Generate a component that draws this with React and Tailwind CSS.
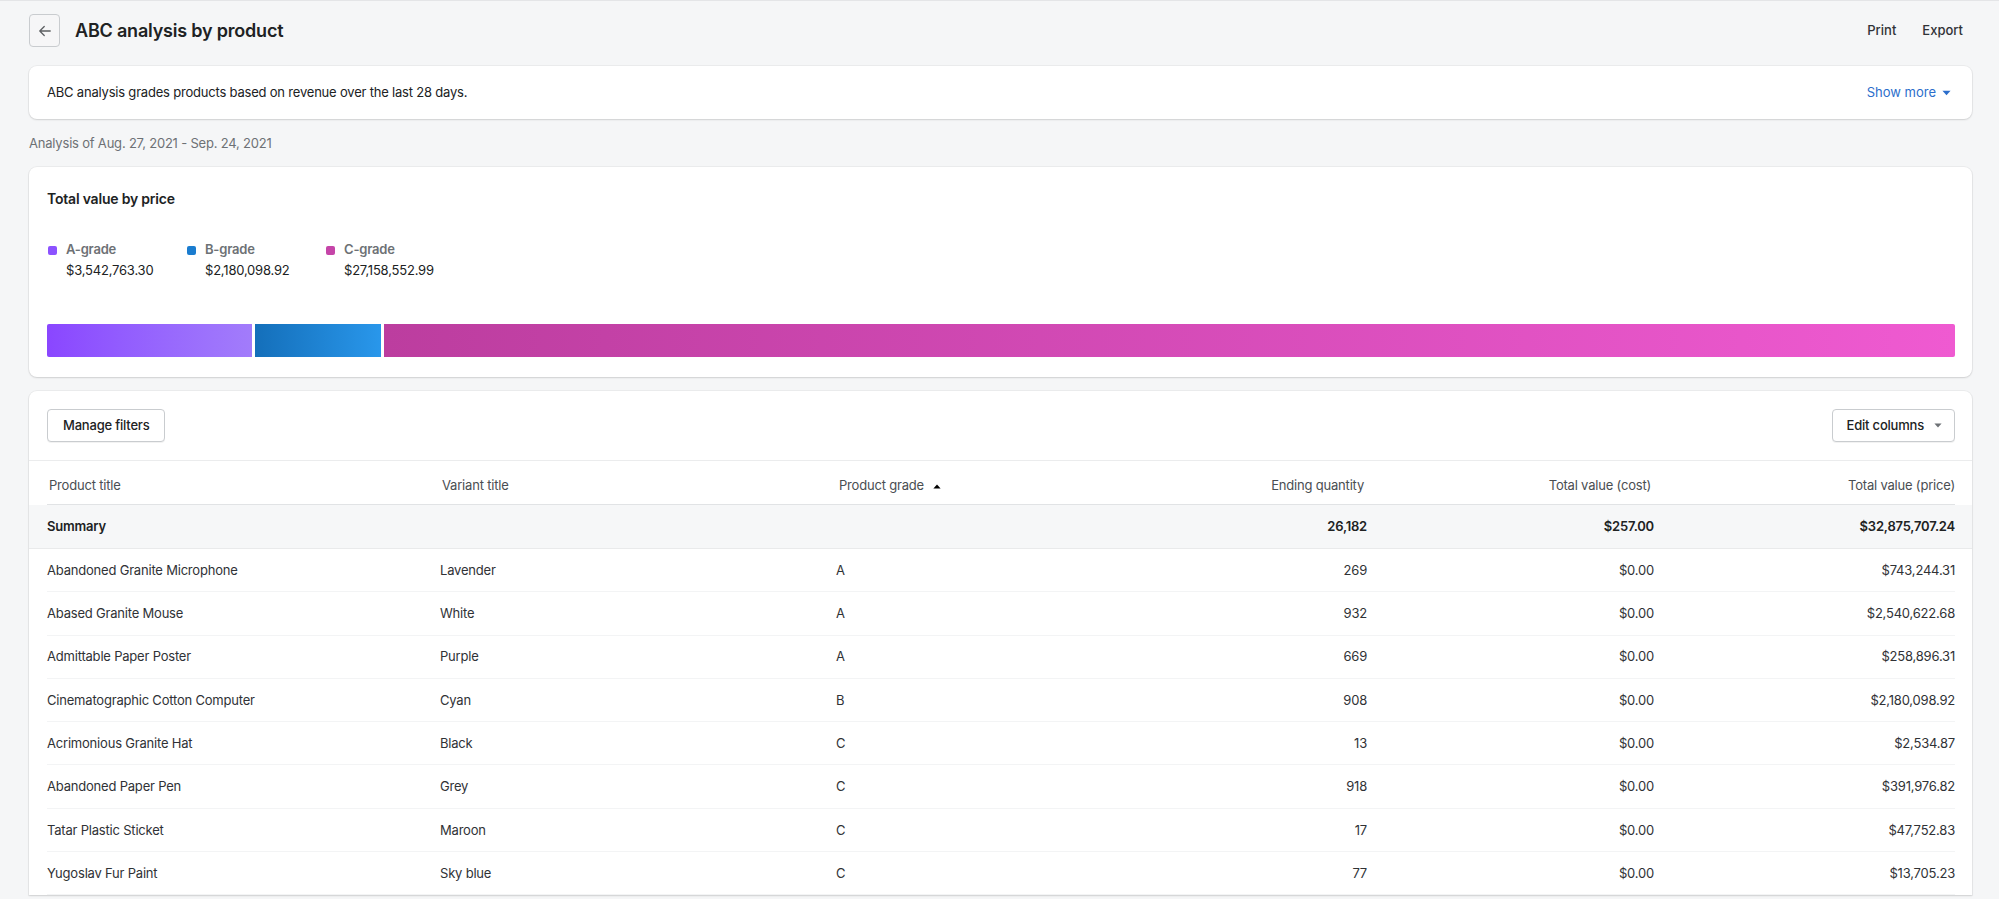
import React from "react";

const rows = [
  ["Abandoned Granite Microphone", "Lavender", "A", "269", "$0.00", "$743,244.31"],
  ["Abased Granite Mouse", "White", "A", "932", "$0.00", "$2,540,622.68"],
  ["Admittable Paper Poster", "Purple", "A", "669", "$0.00", "$258,896.31"],
  ["Cinematographic Cotton Computer", "Cyan", "B", "908", "$0.00", "$2,180,098.92"],
  ["Acrimonious Granite Hat", "Black", "C", "13", "$0.00", "$2,534.87"],
  ["Abandoned Paper Pen", "Grey", "C", "918", "$0.00", "$391,976.82"],
  ["Tatar Plastic Sticket", "Maroon", "C", "17", "$0.00", "$47,752.83"],
  ["Yugoslav Fur Paint", "Sky blue", "C", "77", "$0.00", "$13,705.23"],
];

const grid = "grid grid-cols-[393px_396px_300px_231px_287px_301px] items-center";

function Caret({ className }) {
  return (
    <svg viewBox="0 0 10 6" className={className} fill="currentColor">
      <path d="M0.5 0.5h9L5 5.5z" />
    </svg>
  );
}

export default function App() {
  return (
    <div
      className="min-h-screen bg-[#f5f6f7] border-t border-[#e4e5e7] text-[#202223] pl-[29px] pr-[27px] tracking-[-0.2px]"
      style={{ fontFamily: "Inter, 'Noto Sans', sans-serif" }}
    >
      {/* Header */}
      <div className="flex items-center justify-between pt-[13px]">
        <div className="flex items-center">
          <button className="w-[31px] h-[33px] flex items-center justify-center rounded-[4px] border border-[#c9cccf] bg-[#f6f6f7] text-[#5c5f62]">
            <svg viewBox="0 0 24 24" className="w-[18px] h-[18px]" fill="none" stroke="currentColor" strokeWidth="1.7" strokeLinecap="round" strokeLinejoin="round">
              <path d="M19 12H5M11 6l-6 6 6 6" />
            </svg>
          </button>
          <h1 className="ml-[15px] text-[18px] font-semibold tracking-[-0.2px] text-[#202223]">ABC analysis by product</h1>
        </div>
        <div className="flex items-center gap-[26px] mr-[9px] text-[13px] font-medium text-[#303236] tracking-normal">
          <span>Print</span>
          <span>Export</span>
        </div>
      </div>

      {/* Description card */}
      <div className="mt-[19px] h-[53px] bg-white rounded-[8px] shadow-[0_1px_2px_rgba(0,0,0,0.12),0_0_0_1px_rgba(63,63,68,0.05)] flex items-center justify-between pl-[18px] pr-[21px]">
        <span className="text-[13px] text-[#202223]">ABC analysis grades products based on revenue over the last 28 days.</span>
        <span className="flex items-center gap-[6px] text-[13px] text-[#2c6ecb] tracking-normal">
          Show more
          <Caret className="w-[9px] h-[6px]" />
        </span>
      </div>

      <div className="h-[48px] pt-[2px] flex items-center text-[13px] text-[#6d7175]">Analysis of Aug. 27, 2021 - Sep. 24, 2021</div>

      {/* Chart card */}
      <div className="h-[210px] bg-white rounded-[8px] shadow-[0_1px_2px_rgba(0,0,0,0.12),0_0_0_1px_rgba(63,63,68,0.05)] pl-[18px] pr-[17px] pt-[22px]">
        <div className="text-[14px] font-semibold text-[#202223] leading-[20px]">Total value by price</div>
        <div className="mt-[31px] flex">
          {[
            ["A-grade", "$3,542,763.30", "bg-[#8c52ff]"],
            ["B-grade", "$2,180,098.92", "bg-[#1a7ccf]"],
            ["C-grade", "$27,158,552.99", "bg-[#c545a8]"],
          ].map(([label, value, color]) => (
            <div key={label} className="w-[139px]">
              <div className="flex items-center h-[20px]">
                <span className={`w-[9px] h-[9px] rounded-[2px] ml-[1px] ${color}`} />
                <span className="ml-[9px] text-[13px] font-semibold text-[#6d7175]">{label}</span>
              </div>
              <div className="ml-[19px] h-[22px] flex items-center text-[13px] text-[#202223]">{value}</div>
            </div>
          ))}
        </div>
        <div className="mt-[42px] h-[33px] flex gap-[3px]">
          <div className="basis-0 grow-[354] rounded-l-[2px] bg-gradient-to-r from-[#8a46ff] to-[#a27cfb]" />
          <div className="basis-0 grow-[218] bg-gradient-to-r from-[#146fba] to-[#2997eb]" />
          <div className="basis-0 grow-[2716] rounded-r-[2px] bg-gradient-to-r from-[#bc3d9f] to-[#ef5ad1]" />
        </div>
      </div>

      {/* Table card */}
      <div className="mt-[14px] bg-white rounded-t-[8px] shadow-[0_1px_2px_rgba(0,0,0,0.12),0_0_0_1px_rgba(63,63,68,0.05)] overflow-hidden">
        <div className="h-[70px] flex items-center justify-between pl-[18px] pr-[17px] border-b border-[#ebeced]">
          <button className="h-[33px] px-[15px] rounded-[4px] border border-[#c9cccf] bg-white text-[13px] font-medium text-[#202223] shadow-[0_1px_0_rgba(0,0,0,0.05)]">
            Manage filters
          </button>
          <button className="h-[33px] pl-[14px] pr-[12px] rounded-[4px] border border-[#c9cccf] bg-white text-[13px] font-medium text-[#202223] flex items-center gap-[10px] shadow-[0_1px_0_rgba(0,0,0,0.05)]">
            Edit columns
            <Caret className="w-[8px] h-[5px] text-[#6d7175]" />
          </button>
        </div>
        <div className="pl-[18px] pr-[17px]">
          <div className={`${grid} h-[44px] pt-[7px] text-[13px] text-[#4a4e52] border-b border-[#e1e3e5]`}>
            <span className="pl-[2px]">Product title</span>
            <span className="pl-[2px]">Variant title</span>
            <span className="pl-[3px] flex items-center gap-[9px]">
              Product grade
              <Caret className="w-[8px] h-[5px] rotate-180 text-[#000]" />
            </span>
            <span className="text-right pr-[3px]">Ending quantity</span>
            <span className="text-right pr-[3px]">Total value (cost)</span>
            <span className="text-right">Total value (price)</span>
          </div>
        </div>
        <div className="bg-[#f6f7f8] border-b border-[#e9eaeb] pl-[18px] pr-[17px]">
          <div className={`${grid} h-[43px] pt-[1px] text-[13px] font-semibold text-[#202223]`}>
            <span>Summary</span>
            <span />
            <span />
            <span className="text-right">26,182</span>
            <span className="text-right">$257.00</span>
            <span className="text-right">$32,875,707.24</span>
          </div>
        </div>
        <div className="pl-[18px] pr-[17px]">
          {rows.map((r) => (
            <div key={r[0]} className={`${grid} h-[43.3px] pt-[1px] text-[13px] text-[#303236] border-b border-[#f3f4f5]`}>
              <span>{r[0]}</span>
              <span>{r[1]}</span>
              <span>{r[2]}</span>
              <span className="text-right">{r[3]}</span>
              <span className="text-right">{r[4]}</span>
              <span className="text-right">{r[5]}</span>
            </div>
          ))}
        </div>
      </div>
    </div>
  );
}
